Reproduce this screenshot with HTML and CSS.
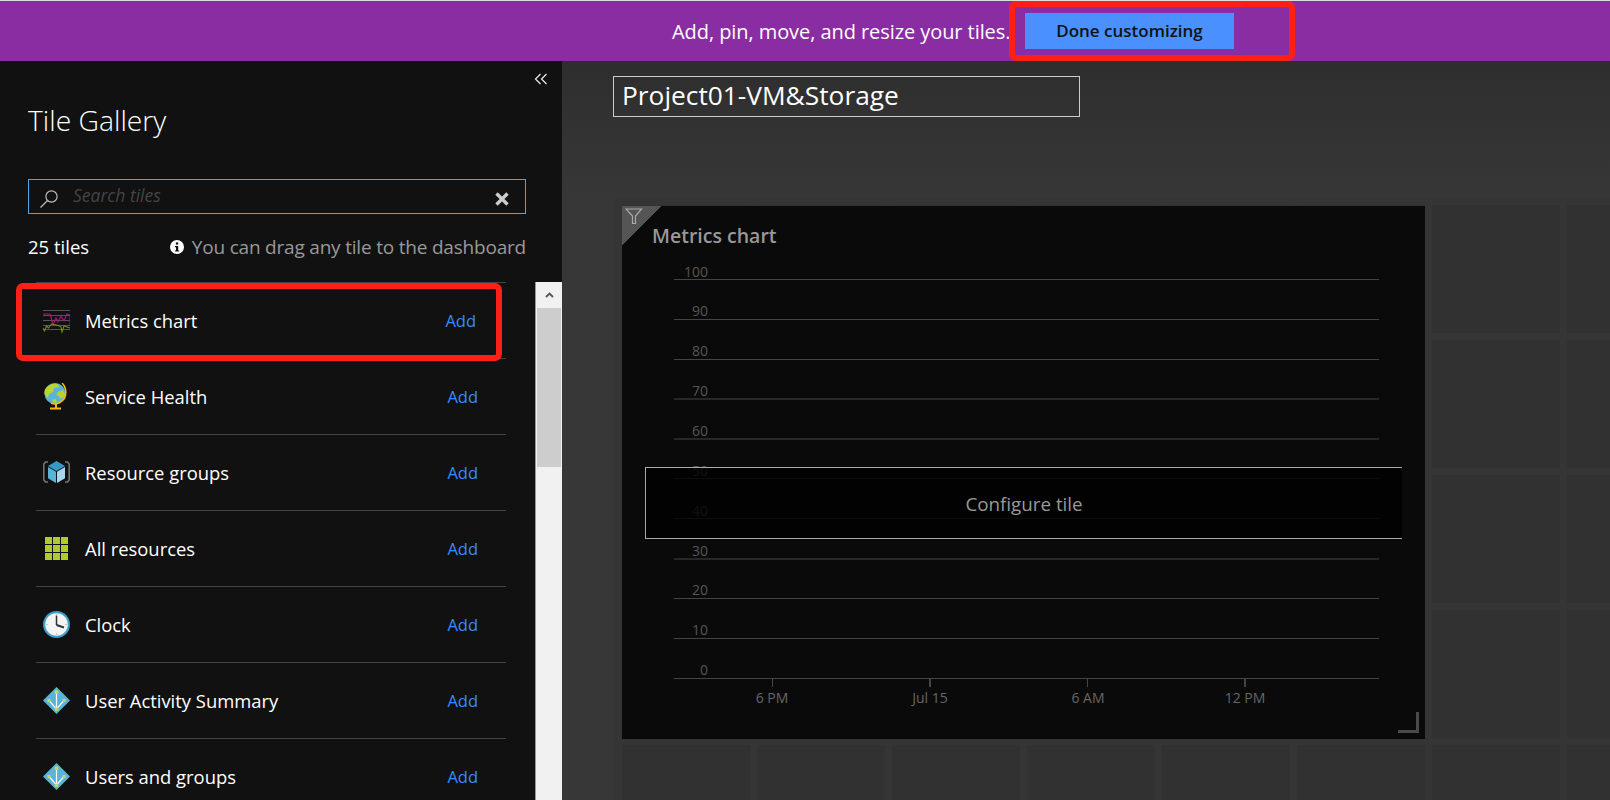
FILE: index.html
```html
<!DOCTYPE html>
<html lang="en">
<head>
<meta charset="UTF-8">
<title>Tile Gallery</title>
<link rel="stylesheet" href="styles.css">
</head>
<body>

<header class="banner">
  <span class="banner-text">Add, pin, move, and resize your tiles.</span>
  <button class="done-btn">Done customizing</button>
</header>

<div class="layout">

  <aside class="gallery">
    <div class="collapse">
      <svg width="14" height="12" viewBox="0 0 14 12"><path d="M6.5 1 1.5 6l5 5M12.5 1l-5 5 5 5" fill="none" stroke="#eee" stroke-width="1.2"/></svg>
    </div>
    <h2 class="gallery-title">Tile Gallery</h2>
    <div class="search">
      <svg class="search-icon" width="20" height="20" viewBox="0 0 20 20"><circle cx="12.5" cy="7.5" r="5.6" fill="none" stroke="#bbb" stroke-width="1.2"/><path d="M8.5 11.5 1.5 18.5" stroke="#bbb" stroke-width="1.2"/></svg>
      <span class="search-text">Search tiles</span>
      <svg class="search-clear" width="14" height="14" viewBox="0 0 14 14"><path d="M1.5 1.5l11 11M12.5 1.5l-11 11" stroke="#ccc" stroke-width="3.4"/></svg>
    </div>
    <div class="summary">
      <span class="tile-count">25 tiles</span>
      <span class="hint">
        <svg width="14" height="14" viewBox="0 0 14 14"><circle cx="7" cy="7" r="7" fill="#fff"/><rect x="5.9" y="2.4" width="2.3" height="2.2" fill="#111"/><path d="M5 6h3.2v4.4H9.2v1.2H5v-1.2h1V7.2H5z" fill="#111"/></svg>
        You can drag any tile to the dashboard
      </span>
    </div>

    <div class="list-wrap">
      <ul class="tile-list">
        <li class="tile-row first">
          <svg class="row-icon" width="27" height="27" viewBox="0 0 27 27">
            <path d="M0 3.5h27M0 8.5h27M0 13.5h27M0 18.5h27M0 22.5h27" stroke="#555" stroke-width="1"/>
            <path d="M0 7h7l1 3 2 8 3-7 2 4 3-6 3 5 3-7 3 1v10" fill="none" stroke="#a3127f" stroke-width="1.2"/>
            <path d="M0 21l1.500 3 2-5 2 2 3-4 5 1 3 1 1.500 1 1 5 2-6 6 2" fill="none" stroke="#6f8f18" stroke-width="1.1"/>
          </svg>
          <span class="row-name">Metrics chart</span>
          <a class="add-link">Add</a>
        </li>
        <li class="tile-row">
          <svg class="row-icon" width="27" height="27" viewBox="0 0 27 27">
            <circle cx="12" cy="10.500" r="10.500" fill="#59b4d9"/>
            <path d="M3 5c3-4 8-5 12-4l1 3-5 1-1 4-4 2-1 4-3-3C1 10 1 7 3 5zM15 9l5-2 2 4-1 3-4 2-1-3-3-1zM9 17l4-1 1 3-3 1z" fill="#b8d432"/>
            <path d="M19 0c5 5 5 14 0 18-3 3-8 3.500-11 2" fill="none" stroke="#ffb900" stroke-width="1.600"/>
            <path d="M13 20.500v4M7 25.500h11" stroke="#ffb900" stroke-width="2"/>
          </svg>
          <span class="row-name">Service Health</span>
          <a class="add-link">Add</a>
        </li>
        <li class="tile-row">
          <svg class="row-icon" width="27" height="27" viewBox="0 0 27 27">
            <path d="M5 3H2.500L.8 5v16l1.700 2H5M22 3h2.500L26.200 5v16l-1.700 2H22" fill="none" stroke="#777" stroke-width="1.500"/>
            <path d="M13.500 2 22 7l-8.500 5L5 7z" fill="#3999c6"/>
            <path d="M5 8l8 4.800V24l-8-4.800z" fill="#59b4d9"/>
            <path d="M22 8l-8 4.800V24l8-4.800z" fill="#a5d8ef"/>
          </svg>
          <span class="row-name">Resource groups</span>
          <a class="add-link">Add</a>
        </li>
        <li class="tile-row">
          <svg class="row-icon" width="27" height="27" viewBox="0 0 27 27">
            <g fill="#b0cc28">
              <rect x="2" y="2" width="7" height="7"/><rect x="10" y="2" width="7" height="7"/><rect x="18" y="2" width="7" height="7"/>
              <rect x="2" y="10" width="7" height="7"/><rect x="10" y="10" width="7" height="7"/><rect x="18" y="10" width="7" height="7"/>
              <rect x="2" y="18" width="7" height="7"/><rect x="10" y="18" width="7" height="7"/><rect x="18" y="18" width="7" height="7"/>
            </g>
          </svg>
          <span class="row-name">All resources</span>
          <a class="add-link">Add</a>
        </li>
        <li class="tile-row">
          <svg class="row-icon" width="27" height="27" viewBox="0 0 27 27">
            <circle cx="13.500" cy="13.500" r="13.500" fill="#3e9dc9"/>
            <circle cx="13.500" cy="13.500" r="11.300" fill="#f4f4f4"/>
            <path d="M13.500 14V4.500" stroke="#333" stroke-width="1.500"/>
            <path d="M13.500 14l7.500 2.500" stroke="#333" stroke-width="2"/>
            <path d="M13.500 3.500v1M13.500 22.500v1M3.500 13.500h1M22.500 13.500h1" stroke="#999" stroke-width="1"/>
          </svg>
          <span class="row-name">Clock</span>
          <a class="add-link">Add</a>
        </li>
        <li class="tile-row">
          <svg class="row-icon" width="27" height="27" viewBox="0 0 27 27">
            <path d="M13.500 0 27 13.500 13.500 27 0 13.500z" fill="#59b4d9"/>
            <path d="M13.500 5v17M6 13.500l7.500 8.500 7.500-8.500" fill="none" stroke="#fff" stroke-width="1.200"/>
            <g fill="#c5dc4a"><rect x="11.800" y="3.500" width="3.400" height="3.400"/><rect x="11.800" y="20.500" width="3.400" height="3.400"/><rect x="4.500" y="12" width="3" height="3"/><rect x="19.500" y="12" width="3" height="3"/></g>
          </svg>
          <span class="row-name">User Activity Summary</span>
          <a class="add-link">Add</a>
        </li>
        <li class="tile-row">
          <svg class="row-icon" width="27" height="27" viewBox="0 0 27 27">
            <path d="M13.500 0 27 13.500 13.500 27 0 13.500z" fill="#59b4d9"/>
            <path d="M13.500 5v17M6 13.500l7.500 8.500 7.500-8.500" fill="none" stroke="#fff" stroke-width="1.200"/>
            <g fill="#c5dc4a"><rect x="11.800" y="3.500" width="3.400" height="3.400"/><rect x="11.800" y="20.500" width="3.400" height="3.400"/><rect x="4.500" y="12" width="3" height="3"/><rect x="19.500" y="12" width="3" height="3"/></g>
          </svg>
          <span class="row-name">Users and groups</span>
          <a class="add-link">Add</a>
        </li>
      </ul>
      <div class="scrollbar">
        <div class="scroll-up">
          <svg width="9" height="6" viewBox="0 0 9 6"><path d="M1 5l3.500-3.500L8 5" fill="none" stroke="#555" stroke-width="1.800"/></svg>
        </div>
        <div class="scroll-thumb"></div>
      </div>
    </div>
  </aside>

  <main class="dashboard">
    <div class="dash-name">Project01-VM&amp;Storage</div>
    <div class="board">
      <section class="tile">
        <div class="tile-corner"></div>
        <svg class="funnel" width="18" height="17" viewBox="0 0 18 17"><path d="M1 1h15.500l-6 7v7.500h-3V8z" fill="none" stroke="#aaa" stroke-width="1.200"/></svg>
        <h3 class="tile-title">Metrics chart</h3>
        <svg class="chart" width="803" height="481" viewBox="0 0 803 481">
          <g class="chart-lines">
            <path d="M52 21.500H757M52 61.500H757M52 101.500H757M52 220.500H757M52 260.500H757M52 340.500H757M52 380.500H757M52 420.500H757"/>
            <path d="M52 141H757M52 181H757M52 301H757"/>
            <path d="M150.500 421v8M465.500 421v8"/>
            <path d="M308 421v8M623 421v8" stroke-width="2"/>
          </g>
          <g class="chart-y">
            <text x="86" y="19">100</text>
            <text x="86" y="58">90</text>
            <text x="86" y="98">80</text>
            <text x="86" y="138">70</text>
            <text x="86" y="178">60</text>
            <text x="86" y="218">50</text>
            <text x="86" y="258">40</text>
            <text x="86" y="298">30</text>
            <text x="86" y="337">20</text>
            <text x="86" y="377">10</text>
            <text x="86" y="417">0</text>
          </g>
          <g class="chart-x">
            <text x="150" y="445">6 PM</text>
            <text x="308" y="445">Jul 15</text>
            <text x="466" y="445">6 AM</text>
            <text x="623" y="445">12 PM</text>
          </g>
        </svg>
        <div class="configure">Configure tile</div>
        <div class="resize-handle"></div>
      </section>
    </div>
  </main>

</div>

<!-- red markers drawn on top of the screenshot -->
<div class="marker marker-done"></div>
<div class="marker marker-row"></div>

</body>
</html>
```

FILE: styles.css
```css
* {
  box-sizing: border-box;
}
html, body {
  height: 800px;
  margin: 0;
  overflow: hidden;
}
body {
  background-color: #333;
  font-family: "Open Sans", "Noto Sans", sans-serif;
  color: #fff;
}

/* top banner */
.banner {
  display: flex;
  align-items: center;
  height: 61px;
  padding: 1px 0 0 672px;
  border-top: 1px solid #ddd;
  background-color: #8a2da3;
}
.banner-text {
  width: 353px;
  font-size: 20px;
  white-space: nowrap;
  letter-spacing: -0.07px;
}
.done-btn {
  width: 209px;
  height: 36px;
  margin-top: -1px;
  padding-bottom: 2px;
  border: none;
  background-color: #4a90ff;
  color: #111;
  font-family: inherit;
  font-size: 17px;
  font-weight: 600;
}

.layout {
  display: flex;
  height: 739px;
}

/* left panel */
.gallery {
  display: flex;
  flex-direction: column;
  flex: none;
  width: 562px;
  background-color: #111;
}
.collapse {
  display: flex;
  justify-content: flex-end;
  height: 24px;
  padding: 12px 14px 0 0;
}
.gallery-title {
  margin: 0 0 0 28px;
  height: 71px;
  padding-top: 15px;
  font-size: 28.300px;
  line-height: 40px;
  font-weight: 300;
}
.search {
  display: flex;
  align-items: center;
  height: 35px;
  margin: 23px 36px 0 28px;
  padding: 0 16px 0 10px;
  border: 1px solid #4ea6e6;
  position: relative;
}
.search-icon {
  margin-top: 4px;
}
.search-text {
  margin-left: 14px;
  margin-top: -3px;
  color: #444;
  font-size: 17.500px;
  font-style: italic;
}
.search-clear {
  margin-left: auto;
  margin-top: 5px;
}
.summary {
  display: flex;
  justify-content: space-between;
  align-items: center;
  height: 26px;
  margin: 20px 36px 0 28px;
  font-size: 18.500px;
}
.tile-count {
  margin-top: -1px;
}
.hint {
  display: flex;
  align-items: center;
  gap: 8px;
  color: #999;
  font-size: 19px;
  letter-spacing: -0.2px;
  white-space: nowrap;
}
.list-wrap {
  display: flex;
  flex: 1;
  min-height: 0;
  margin-top: 22px;
  padding-left: 36px;
}
.tile-list {
  width: 470px;
  height: 540px;
  margin: 0;
  padding: 0;
  list-style: none;
  border-top: 1px solid #444;
}
.tile-row {
  display: flex;
  align-items: center;
  height: 76px;
  padding: 0 28px 0 7px;
  border-bottom: 1px solid #444;
}
.row-icon {
  flex: none;
  margin-right: 15px;
}
.row-name {
  font-size: 18.400px;
  white-space: nowrap;
}
.add-link {
  margin-left: auto;
  color: #3a8bff;
  font-size: 16.500px;
}
.first .add-link {
  margin-right: 2px;
}
.scrollbar {
  width: 27px;
  margin-left: auto;
  border-left: 1px solid #999;
  background-color: #f1f1f1;
}
.scroll-up {
  display: flex;
  align-items: center;
  justify-content: center;
  height: 26px;
}
.scroll-thumb {
  height: 159px;
  margin: 0 1px;
  background-color: #cdcdcd;
}

/* dashboard side */
.dashboard {
  flex: 1;
  display: flex;
  flex-direction: column;
  background: linear-gradient(#2e2e2e, #373737 140px);
}
.dash-name {
  width: 467px;
  height: 41px;
  margin: 15px 0 0 51px;
  padding-left: 8px;
  border: 1px solid #ccc;
  font-size: 26.300px;
  line-height: 37px;
  white-space: nowrap;
}
.board {
  flex: 1;
  margin: 81px 0 0 53px;
  padding: 8px 0 0 7px;
  background-color: #313131;
  background-image: linear-gradient(#353535 7px, transparent 7px), linear-gradient(90deg, #353535 7px, transparent 7px);
  background-size: 135px 135px;
}

/* the chart tile */
.tile {
  position: relative;
  width: 803px;
  height: 533px;
  background-color: #0a0a0a;
}
.tile-corner {
  position: absolute;
  left: 0;
  top: 0;
  width: 40px;
  height: 39px;
  background: linear-gradient(to bottom right, #555 50%, transparent 50%);
}
.funnel {
  position: absolute;
  left: 3px;
  top: 2px;
}
.tile-title {
  height: 52px;
  margin: 0;
  padding: 17px 0 0 30px;
  color: #999;
  font-size: 19.500px;
  line-height: 26px;
  font-weight: 600;
}
.chart {
  display: block;
}
.chart-lines path {
  stroke: #444;
  fill: none;
}
.chart-y text {
  fill: #555;
  font-size: 14px;
  text-anchor: end;
}
.chart-x text {
  fill: #666;
  font-size: 14px;
  text-anchor: middle;
}
.configure {
  position: absolute;
  left: 23px;
  top: 261px;
  width: 757px;
  height: 72px;
  border: 1px solid #aaa;
  border-right: none;
  background-color: rgba(0, 0, 0, 0.8);
  color: #999;
  font-size: 18.800px;
  line-height: 72px;
  text-align: center;
}
.resize-handle {
  position: absolute;
  left: 776px;
  top: 506px;
  width: 21px;
  height: 21px;
  border-right: 3px solid #4a4a4a;
  border-bottom: 3px solid #4a4a4a;
}

/* red markers */
.marker {
  position: absolute;
  border: 6px solid #ff2015;
  border-radius: 7px;
}
.marker-done {
  left: 1009px;
  top: 1px;
  width: 286px;
  height: 60px;
}
.marker-row {
  left: 16px;
  top: 283px;
  width: 486px;
  height: 78px;
}
```
